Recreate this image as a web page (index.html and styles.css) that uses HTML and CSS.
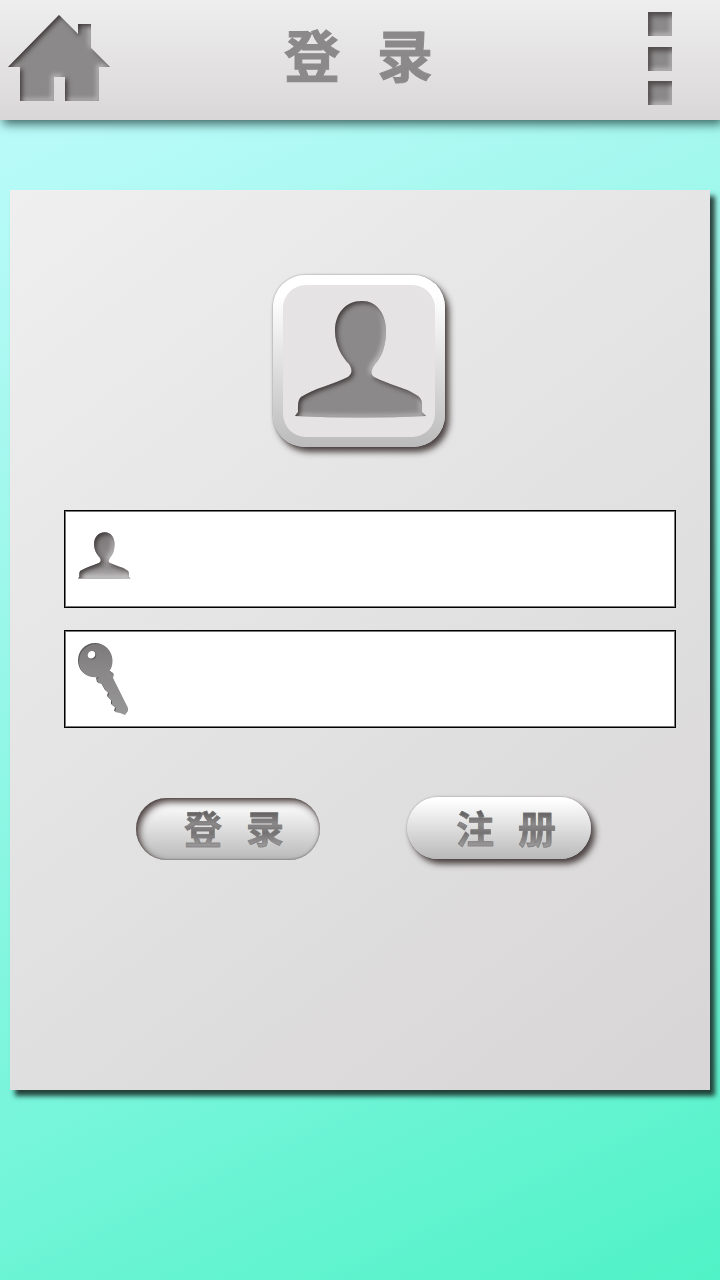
FILE: index.html
```html
<!DOCTYPE html>
<html lang="zh-CN">
<head>
<meta charset="utf-8">
<title>登录</title>
<link rel="stylesheet" href="styles.css">
</head>
<body>
<svg class="defs" width="0" height="0" aria-hidden="true">
  <defs>
    <filter id="inset" x="-10%" y="-10%" width="120%" height="120%" color-interpolation-filters="sRGB">
      <feGaussianBlur in="SourceAlpha" stdDeviation="2.4" result="b"/>
      <feOffset in="b" dx="1.500" dy="2" result="o"/>
      <feComposite in="SourceAlpha" in2="o" operator="out" result="edge"/>
      <feFlood flood-color="#2d2525" flood-opacity=".85"/>
      <feComposite in2="edge" operator="in" result="dark"/>
      <feOffset in="b" dx="-2" dy="-2.5" result="o2"/>
      <feComposite in="SourceAlpha" in2="o2" operator="out" result="edge2"/>
      <feFlood flood-color="#eeeeee" flood-opacity=".6"/>
      <feComposite in2="edge2" operator="in" result="light"/>
      <feMerge result="m"><feMergeNode in="SourceGraphic"/><feMergeNode in="light"/><feMergeNode in="dark"/></feMerge>
      <feGaussianBlur in="m" stdDeviation=".4"/>
    </filter>
    <linearGradient id="fade" x1="0" y1="0" x2="0" y2="1">
      <stop offset="0" stop-color="#7d797a"/><stop offset=".75" stop-color="#918e8f"/><stop offset="1" stop-color="#b8b6b6"/>
    </linearGradient>
    <linearGradient id="metal" x1="0" y1="0" x2="0" y2="1">
      <stop offset="0" stop-color="#7b797a"/><stop offset=".3" stop-color="#878586"/><stop offset="1" stop-color="#989797"/>
    </linearGradient>
    <symbol id="person" viewBox="0 0 132 118">
      <path d="M67 0C50 0 40 13 40 30C40 44 47 56 54 63C58 69 57 73 53 76C37 84 20 87 6 96C3 99 3 103 3 111L0 115Q66 118 131 115L127 111C127 103 128 99 123 95C110 86 94 84 79 76C75 73 76 69 80 63C87 56 91 44 91 30C91 13 82 0 67 0Z"/>
    </symbol>
  </defs>
</svg>
<header class="topbar">
  <svg class="home" viewBox="0 0 104 88"><path d="M51 1L70 20V10H83V34L102 53H91V87H57V63H46V87H12V53H0Z"/></svg>
  <h1 class="title">登录</h1>
  <div class="menu"><i class="dot"></i><i class="dot"></i><i class="dot"></i></div>
</header>
<main class="card">
  <div class="avatar"><div class="avatar-face"><svg class="avatar-person"><use href="#person"/></svg></div></div>
  <div class="field"><svg class="field-person"><use href="#person"/></svg></div>
  <div class="field">
    <svg class="key" viewBox="0 0 52 72">
      <path fill-rule="evenodd" d="M18 0C28 0 34.500 8 34.500 16.500C34.500 22 33 25 31.500 27L36 30L35 34L50 64V67L47 71L42 69L37 68L38 64L34 61L34 57L30 53L31 49L28 47L24 40L20 39L19 35L21 33C8 35 1 27 1 17.500C1 8 8 0 18 0ZM14 7A4.300 4.300 0 1 0 14 15.600A4.300 4.300 0 1 0 14 7Z"/>
    </svg>
  </div>
  <div class="actions">
    <div class="btn pressed"><span class="label">登录</span></div>
    <div class="btn raised"><span class="label">注册</span></div>
  </div>
</main>
</body>
</html>
```
FILE: styles.css
```css
* { box-sizing: border-box; }
body {
  margin: 0;
  height: 1280px;
  overflow: hidden;
  background: linear-gradient(155deg, #bdfbfa 0%, #b6faf7 12%, #a6f8ef 27%, #74f5d9 73%, #4ff2c6 100%);
  font-family: "Noto Sans CJK SC", sans-serif;
}
.defs { position: absolute; }
.topbar {
  height: 120px;
  display: flex;
  align-items: flex-start;
  justify-content: space-between;
  padding: 12px 48px 0 8px;
  background: linear-gradient(#eeeeee, #dad7d8);
  box-shadow: 3px 4px 10px rgba(20, 50, 48, .75);
}
.home { width: 104px; height: 88px; margin-top: 2px; fill: #8b898a; filter: url(#inset); }
.title {
  margin: 0 0 0 48px;
  width: 150px;
  font-size: 56px;
  line-height: 82px;
  font-weight: 700;
  letter-spacing: 37px;
  white-space: nowrap;
  color: #8b898a;
  -webkit-text-stroke: 1px #8b898a;
}
.menu { display: flex; flex-direction: column; gap: 10.500px; width: 24px; margin-left: 90px; }
.dot {
  height: 24px;
  background: #8b898a;
  box-shadow: inset 3px 4px 5px rgba(55, 48, 48, .7), inset -2px -3px 4px rgba(225, 223, 223, .5);
}
.card {
  width: 700px;
  height: 900px;
  margin: 70px 0 0 10px;
  padding: 85px 34px 0 54px;
  background: linear-gradient(142deg, #efefef, #e1e1e1 55%, #d9d6d7 95%);
  box-shadow: 5px 6px 5px 0 rgba(25, 45, 40, .9);
}
.avatar {
  width: 172px;
  height: 172px;
  margin: 0 0 63px 209px;
  padding: 10px;
  border-radius: 32px;
  background: linear-gradient(#fff 12%, #bbb);
  box-shadow: 4px 5px 6px rgba(60, 50, 50, .9), 0 0 2px rgba(80, 70, 70, .6);
}
.avatar-face {
  height: 152px;
  padding: 16px 0 0 12px;
  border-radius: 23px;
  background: #e5e3e4;
}
.avatar-person { display: block; width: 132px; height: 118px; fill: #8b898a; filter: url(#inset); }
.field {
  height: 98px;
  margin-bottom: 22px;
  padding: 12px 13px;
  border: 1px solid #000;
  background: #fff;
  box-shadow: inset 0 0 0 1px #777;
}
.field-person { display: block; width: 53px; height: 48px; margin-top: 9px; fill: url(#fade); filter: url(#inset); }
.key { display: block; width: 52px; height: 72px; margin-top: 1px; fill: url(#metal); filter: drop-shadow(-.5px -.5px .5px #5c5959); }
.actions { display: flex; gap: 87px; padding: 46px 0 0 72px; }
.btn {
  width: 184px;
  height: 62px;
  padding: 1px 0 0 49px;
  border-radius: 32px;
  background: linear-gradient(#fff 5%, #b9b9b9);
}
.pressed { box-shadow: inset 3px 4px 7px rgba(65, 52, 52, .95), inset 0 0 2px #554c4c; margin-top: 2px; padding: 0 0 0 48px; }
.raised { box-shadow: 4px 5px 6px rgba(60, 50, 50, .9), 0 0 2px rgba(90, 80, 80, .5); margin-top: 1px; }
.label {
  display: block;
  font-size: 38px;
  line-height: 58px;
  font-weight: 700;
  letter-spacing: 24px;
  white-space: nowrap;
  color: transparent;
  -webkit-text-stroke: .5px #777576;
  background: linear-gradient(#626061 25%, #8b898a 45%, #747273 60%, #979595 80%);
  background-clip: text;
}
```
